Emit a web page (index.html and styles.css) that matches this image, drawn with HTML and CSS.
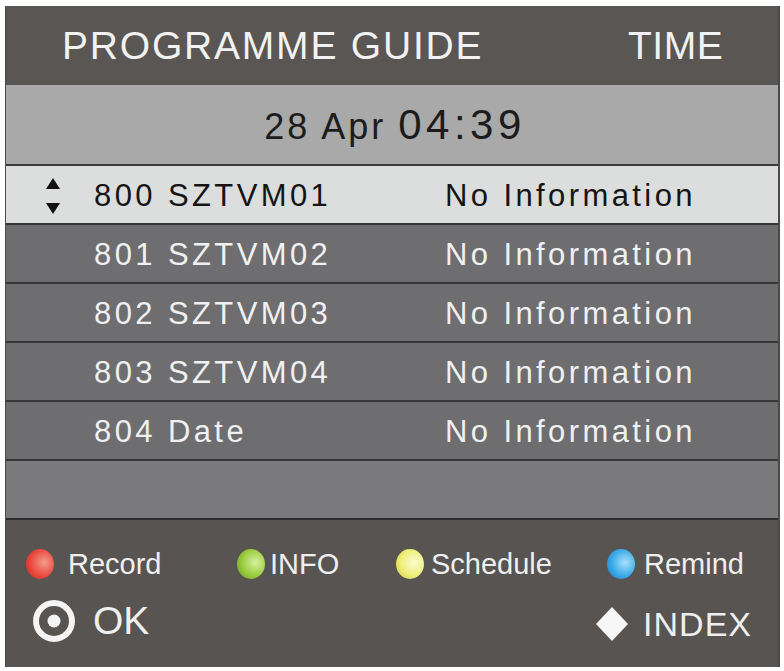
FILE: index.html
```html
<!DOCTYPE html>
<html>
<head>
<meta charset="utf-8">
<link rel="stylesheet" href="styles.css">
</head>
<body>
<div class="panel">
  <div class="header">
    <span class="title">PROGRAMME GUIDE</span>
    <span class="time">TIME</span>
  </div>
  <div class="datebar"><span class="date">28 Apr</span><span class="clock">04:39</span></div>
  <div class="list">
    <div class="row selected">
      <span class="arrows">
        <svg width="16" height="40" viewBox="0 0 16 40"><polygon points="8,2 15,13 1,13" fill="#111"/><polygon points="1,27 15,27 8,38" fill="#111"/></svg>
      </span>
      <span class="chan">800 SZTVM01</span><span class="info">No Information</span>
    </div>
    <div class="row"><span class="arrows"></span><span class="chan">801 SZTVM02</span><span class="info">No Information</span></div>
    <div class="row"><span class="arrows"></span><span class="chan">802 SZTVM03</span><span class="info">No Information</span></div>
    <div class="row"><span class="arrows"></span><span class="chan">803 SZTVM04</span><span class="info">No Information</span></div>
    <div class="row"><span class="arrows"></span><span class="chan">804 Date</span><span class="info">No Information</span></div>
    <div class="row empty"></div>
  </div>
  <div class="footer">
    <div class="keys">
      <span class="key k-rec"><span class="dot red"></span>Record</span>
      <span class="key k-info"><span class="dot green"></span>INFO</span>
      <span class="key k-sch"><span class="dot yellow"></span>Schedule</span>
      <span class="key k-rem"><span class="dot blue"></span>Remind</span>
    </div>
    <div class="keys2">
      <span class="ok">
        <svg width="44" height="44" viewBox="0 0 44 44"><circle cx="22" cy="22" r="18" fill="none" stroke="#f4f4f4" stroke-width="6"/><circle cx="22" cy="22" r="6.5" fill="#f4f4f4"/></svg>
        <span class="oktext">OK</span>
      </span>
      <span class="index">
        <svg width="34" height="36" viewBox="0 0 34 36"><polygon points="17,1 33,18 17,35 1,18" fill="#f6f6f6"/></svg>
        <span class="indextext">INDEX</span>
      </span>
    </div>
  </div>
</div>
</body>
</html>
```
FILE: styles.css
```css
html, body { margin: 0; padding: 0; background: #ffffff; }
body { font-family: "Liberation Sans", Arial, sans-serif; }
.panel {
  margin: 6px 0 0 5px;
  width: 775px;
  height: 661px;
  display: flex;
  flex-direction: column;
  box-sizing: border-box;
  border-left: 1px solid #4a4a4a;
  border-right: 2px solid #4a4a4a;
}
.header {
  height: 79px;
  background: #595654;
  color: #f2f2f2;
  display: flex;
  align-items: center;
  font-size: 39px;
  letter-spacing: 1.8px;
  padding: 0 0 0 56px;
}
.title { width: 566px; }
.time { letter-spacing: 0.5px; }
.datebar {
  height: 79px;
  background: #a9a9a9;
  display: flex;
  align-items: center;
  justify-content: center;
  color: #1c1c1c;
  padding-left: 6px;
}
.date { font-size: 36px; margin-right: 12px; letter-spacing: 3px; margin-top: 4px; }
.clock { font-size: 42px; letter-spacing: 4.5px; }
.list { border-top: 2px solid #3a3a3a; }
.row {
  border-bottom: 2px solid #363638;
  background: #6e6d6f;
  display: flex;
  align-items: center;
  color: #f0f0f0;
  font-size: 31px;
  letter-spacing: 3.4px;
  padding-top: 2px;
  box-sizing: border-box;
  height: 59px;
}
.row.selected { background: #dcdedd; color: #151515; }
.row.empty { background: #7a797b; border-bottom: 2px solid #2e2e2e; }
.arrows { width: 87px; display: flex; justify-content: flex-end; }
.arrows svg { margin-right: 32px; }
.chan { width: 351px; padding-left: 1px; }
.footer {
  flex: 1;
  background: #575452;
  color: #efefef;
  display: flex;
  flex-direction: column;
}
.keys {
  display: flex;
  align-items: center;
  height: 30px;
  margin-top: 29px;
  font-size: 29px;
}
.key { display: flex; align-items: center; }
.dot {
  display: inline-block;
  width: 28px;
  height: 30px;
  border-radius: 50%;
  margin-right: 7px;
}
.red { background: radial-gradient(circle at 65% 45%, #f29a8c 0%, #ea4a3e 55%, #c02822 100%); }
.green { background: radial-gradient(circle at 65% 45%, #d8f0a0 0%, #98cc3c 55%, #6a9a20 100%); }
.yellow { background: radial-gradient(circle at 65% 45%, #fcfcd0 0%, #eeee78 55%, #c8c440 100%); }
.blue { background: radial-gradient(circle at 65% 45%, #a8e0fa 0%, #3aaae8 55%, #1a78c0 100%); }
.k-rec { margin-left: 20px; width: 211px; }
.k-rec .dot { margin-right: 14px; }
.k-info { width: 159px; }
.k-info .dot { margin-right: 5px; }
.k-sch { width: 211px; }
.k-rem .dot { margin-right: 9px; }
.keys2 {
  display: flex;
  align-items: center;
  justify-content: space-between;
  margin-top: 20px;
  height: 44px;
}
.ok { display: flex; align-items: center; margin-left: 26px; }
.oktext { font-size: 39px; margin-left: 17px; }
.index { display: flex; align-items: center; margin-right: 26px; margin-top: 6px; }
.indextext { font-size: 34px; margin-left: 14px; letter-spacing: 1px; }
```
